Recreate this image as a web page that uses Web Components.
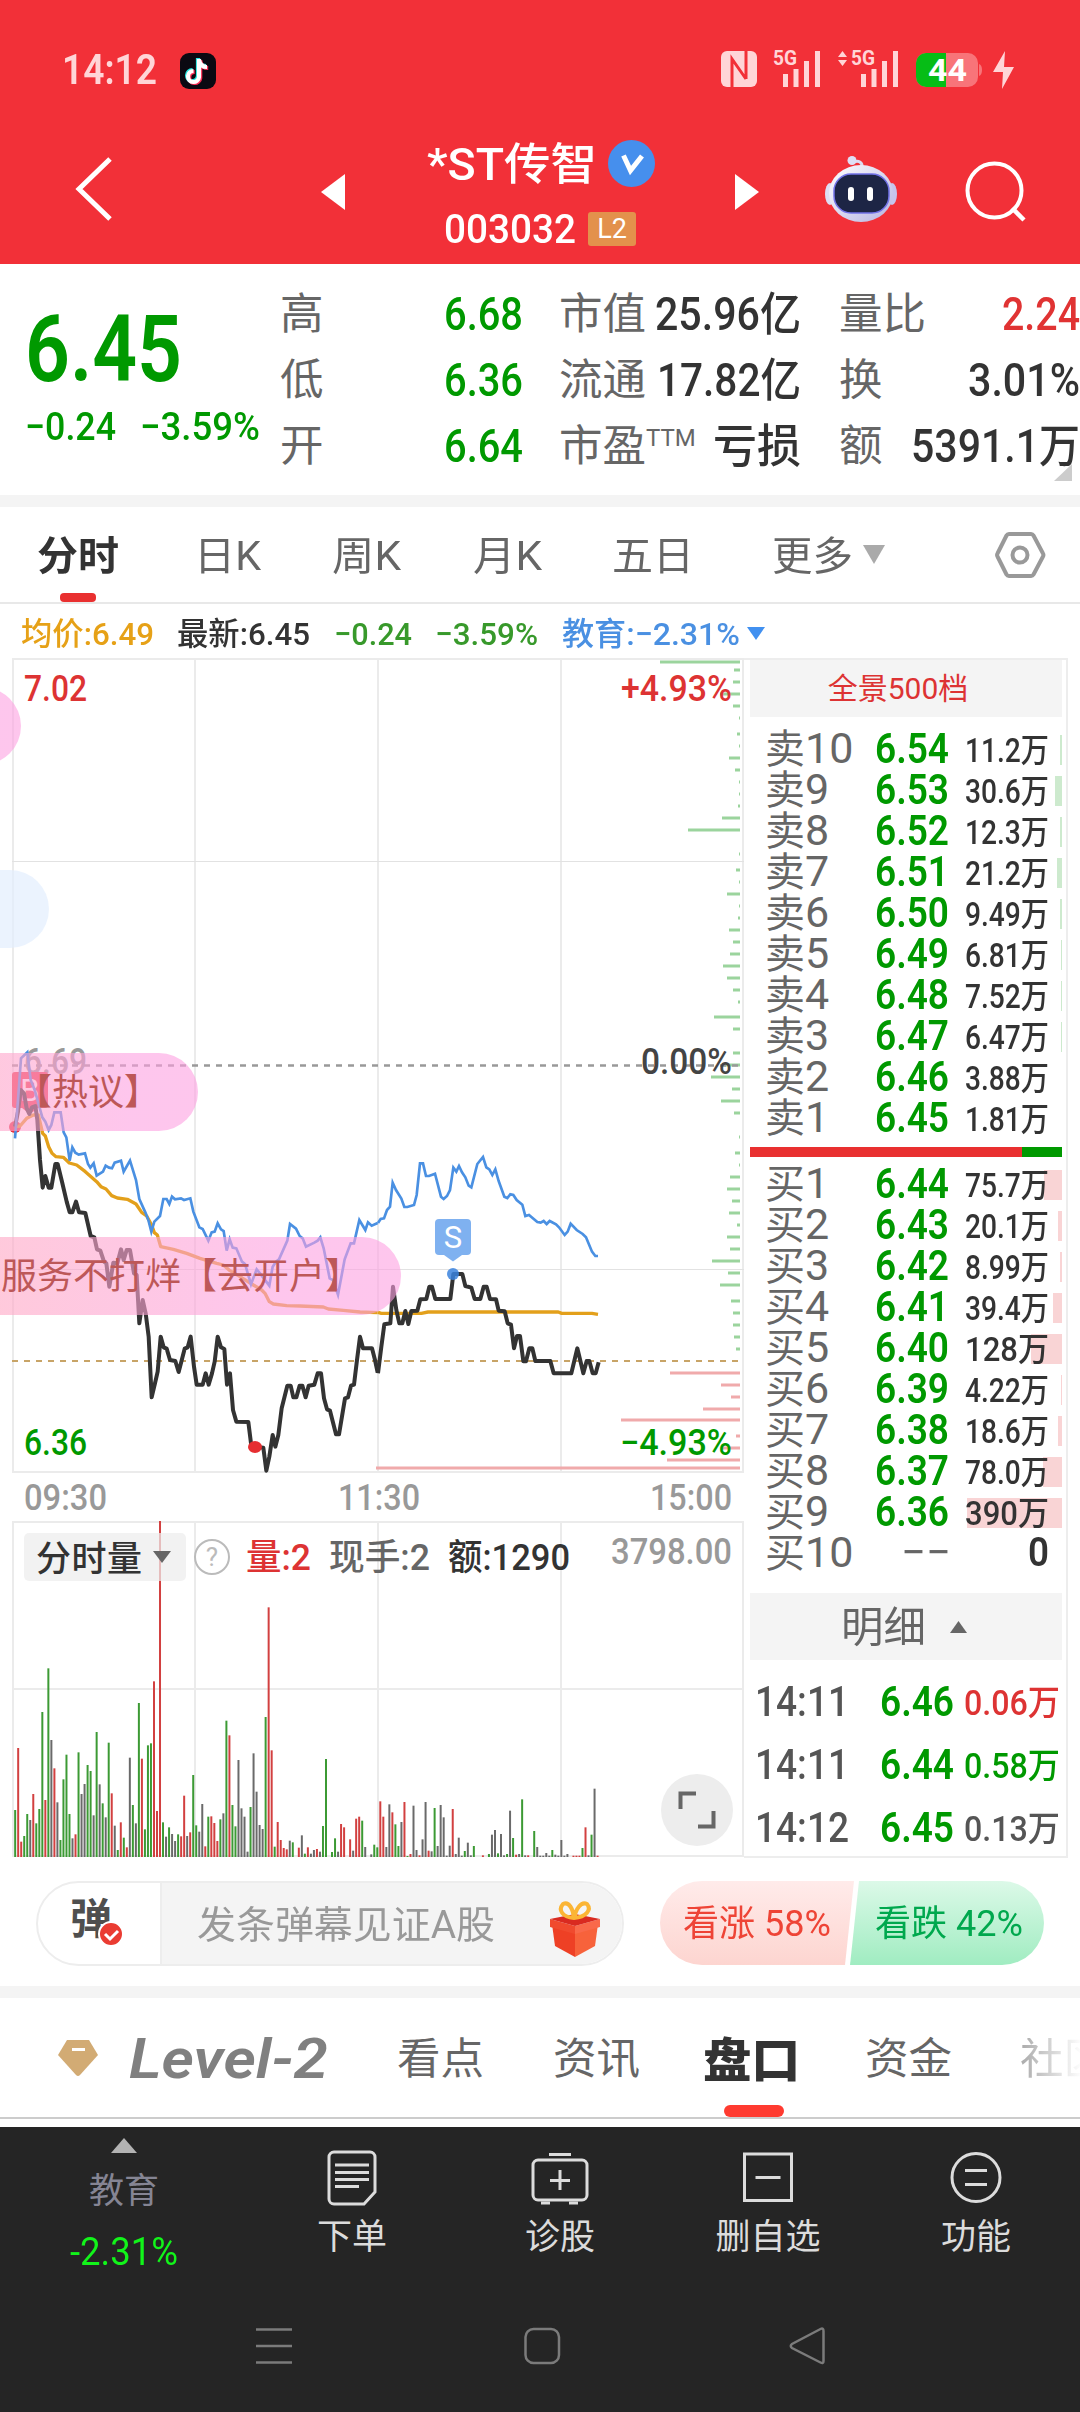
<!DOCTYPE html>
<html lang="zh-CN">
<head>
<meta charset="utf-8">
<title>*ST传智 003032</title>
<style>
  body {
    margin: 0;
    width: 1080px;
    height: 2412px;
    overflow: hidden;
    background: #fff;
    font-family: Roboto, "Noto Sans CJK SC", sans-serif;
    color: #333;
    line-height: 1;
  }
</style>
</head>
<body>
<stock-page></stock-page>

<script>
// Text squeezed to a given width, for the condensed figures
class FitText extends HTMLElement {
  constructor() {
    super();
    this.attachShadow({ mode: 'open' });
    this.shadowRoot.innerHTML = `
      <style>
        :host { display: inline-block; flex: none; line-height: 1; white-space: nowrap; }
        span { display: inline-block; transform-origin: 0 50%; }
      </style>
      <span><slot></slot></span>
    `;
  }

  connectedCallback() {
    const span = this.shadowRoot.querySelector('span');
    const w = Number(this.getAttribute('w'));
    const left = this.getAttribute('ml');
    if (left) this.style.marginLeft = left + 'px';
    const natural = span.getBoundingClientRect().width;
    this.style.width = w + 'px';
    if (natural) span.style.transform = `scaleX(${w / natural})`;
  }
}
customElements.define('fit-text', FitText);

class StatusBar extends HTMLElement {
  constructor() {
    super();
    this.attachShadow({ mode: 'open' });
    this.shadowRoot.innerHTML = `
      <style>
        :host { display: flex; align-items: center; height: 36px; padding: 52px 66px 0 62px; color: #ffd5d7; }
        .time { font-size: 42px; font-weight: 600; }
        .space { flex: 1; }
        svg { display: block; flex: none; overflow: visible; }
        text { font: 700 20px Roboto, sans-serif; }
      </style>
      <fit-text class="time" w="95">14:12</fit-text>
      <svg width="36" height="36" viewBox="0 0 36 36" style="margin-left:23px;margin-top:2px">
        <rect width="36" height="36" rx="9" fill="#0b0912"/>
        <g fill="none" stroke-width="4.2">
          <path d="M19 6v18a5.500 5.500 0 1 1-5.500-6M19 7c1 5 4 7 8 7" stroke="#25e5e0" transform="translate(-1 -1)"/>
          <path d="M19 6v18a5.500 5.500 0 1 1-5.500-6M19 7c1 5 4 7 8 7" stroke="#fb2c55" transform="translate(1.200 1)"/>
          <path d="M19 6v18a5.500 5.500 0 1 1-5.500-6M19 7c1 5 4 7 8 7" stroke="#fff"/>
        </g>
      </svg>
      <div class="space"></div>
      <svg width="293" height="38" viewBox="721 52 293 38" fill="#ffd5d7">
        <rect x="721" y="52" width="36" height="36" rx="6"/>
        <path d="M732 88V60l14 20M746 52v28M732 60v28" fill="none" stroke="#f23037" stroke-width="3"/>
        <text x="773" y="66" textLength="24" lengthAdjust="spacingAndGlyphs">5G</text>
        <path d="M783 75h5v13h-5zM793.500 70h5v18h-5zM804 62h5v26h-5zM815 52h5v36h-5z"/>
        <path d="M838 58l4.500-6 4.500 6zM838 61l4.500 6 4.500-6z"/>
        <text x="851" y="66" textLength="24" lengthAdjust="spacingAndGlyphs">5G</text>
        <path d="M861 75h5v13h-5zM871.500 70h5v18h-5zM882 62h5v26h-5zM893 52h5v36h-5z"/>
        <rect x="916" y="54" width="62" height="34" rx="10" fill="#f87479"/>
        <path d="M926 54h20v34h-20a10 10 0 0 1-10-10V64a10 10 0 0 1 10-10z" fill="#06bd16"/>
        <path d="M979 65q3 1 3 6t-3 6z" fill="#f87479"/>
        <text x="928" y="82" textLength="39" lengthAdjust="spacingAndGlyphs" fill="#fff" style="font-size:31px">44</text>
        <path d="M1005 52l-12 21h10l-1 17 12-22h-10z"/>
      </svg>
    `;
  }
}
customElements.define('status-bar', StatusBar);

class StockHeader extends HTMLElement {
  constructor() {
    super();
    this.attachShadow({ mode: 'open' });
    this.shadowRoot.innerHTML = `
      <style>
        :host { display: block; height: 264px; background: #f23038; color: #fff; }
        .nav { display: flex; height: 176px; align-items: flex-start; }
        svg { display: block; flex: none; }
        .title { width: 390px; display: flex; flex-direction: column; align-items: center; padding-top: 47px; box-sizing: border-box; }
        .name { display: flex; align-items: center; font-size: 44px; font-weight: 500; width: 230px; height: 56px; }
        .name fit-text { margin-top: 3px; }
        .code { display: flex; align-items: center; font-size: 41px; font-weight: 500; width: 192px; height: 50px; margin-top: 13px; }
        .badge { background: #e3914c; border-radius: 3px; width: 48px; height: 34px; margin-left: 12px;
          font-size: 27px; font-weight: 400; line-height: 35px; text-align: center; }
      </style>
      <status-bar></status-bar>
      <div class="nav">
        <svg width="345" height="176" viewBox="0 88 345 176">
          <path d="M110 159L79 189l31 30" fill="none" stroke="#fff" stroke-width="5"/>
          <path d="M321 192l24-18v36z" fill="#fff"/>
        </svg>
        <div class="title">
          <div class="name">
            <fit-text w="170" ml="2">*ST传智</fit-text>
            <svg width="47" height="47" viewBox="0 0 47 47" style="margin-left:11px">
              <circle cx="23.500" cy="23.500" r="23.500" fill="#468fed"/>
              <path d="M15.500 15.500l7 15L34 16" fill="none" stroke="#fff" stroke-width="5"/>
            </svg>
          </div>
          <div class="code">
            <fit-text w="132" ml="0">003032</fit-text>
            <div class="badge">L2</div>
          </div>
        </div>
        <svg width="345" height="176" viewBox="735 88 345 176">
          <defs>
            <linearGradient id="head" x1="0" y1="0" x2="1" y2="1">
              <stop offset="0" stop-color="#fff"/>
              <stop offset="1" stop-color="#b6b4e2"/>
            </linearGradient>
          </defs>
          <path d="M759 192l-24-18v36z" fill="#fff"/>
          <path d="M862 168c1-6-4-8-8-6" fill="none" stroke="#dcdcf2" stroke-width="3"/>
          <circle cx="852" cy="160.500" r="4.500" fill="#dfdff5"/>
          <ellipse cx="830" cy="194" rx="5" ry="11" fill="#dedef4"/>
          <ellipse cx="892" cy="194" rx="5" ry="11" fill="#c6c4ec"/>
          <ellipse cx="861" cy="193.500" rx="32" ry="28.500" fill="url(#head)"/>
          <rect x="834" y="174" width="55" height="39" rx="17" fill="#1d2545" stroke="#7272e8" stroke-width="1.500"/>
          <rect x="848" y="187" width="6" height="14" rx="3" fill="#fff"/>
          <rect x="867" y="187" width="6" height="14" rx="3" fill="#fff"/>
          <circle cx="994.500" cy="190.500" r="27" fill="none" stroke="#fff" stroke-width="4"/>
          <path d="M1012 208l12 12" stroke="#fff" stroke-width="4.500"/>
        </svg>
      </div>
    `;
  }
}
customElements.define('stock-header', StockHeader);

class QuotePanel extends HTMLElement {
  constructor() {
    super();
    this.attachShadow({ mode: 'open' });
    this.shadowRoot.innerHTML = `
      <style>
        :host { display: grid; grid-template-columns: 280px 243px 36px 242px 38px 241px; height: 231px; padding-top: 17px;
          box-sizing: border-box; font-size: 46px; font-weight: 500; position: relative; }
        .green { color: #009900; }
        .red { color: #e03333; }
        .price fit-text { display: block; }
        .price { padding-top: 23px; }
        .big { font-size: 92px; font-weight: 600; }
        .chg { display: flex; margin-top: 12px; font-size: 39px; }
        .col { display: flex; flex-direction: column; }
        .col div { height: 66px; display: flex; align-items: center; justify-content: space-between; }
        label { font-size: 43.500px; font-weight: 400; color: #666; margin-top: 2px; }
        sup { font-size: 24px; line-height: 1; vertical-align: 15px; }
        .corner { position: absolute; right: 8px; bottom: 14px; border-left: 18px solid transparent; border-bottom: 17px solid #ccc; }
      </style>
      <div class="price green">
        <fit-text class="big" w="157" ml="25">6.45</fit-text>
        <div class="chg"><fit-text w="91" ml="25">−0.24</fit-text><fit-text w="120" ml="24">−3.59%</fit-text></div>
      </div>
      <div class="col">
        <div><label>高</label><fit-text class="green" w="79">6.68</fit-text></div>
        <div><label>低</label><fit-text class="green" w="79">6.36</fit-text></div>
        <div><label>开</label><fit-text class="green" w="79">6.64</fit-text></div>
      </div>
      <i></i>
      <div class="col">
        <div><label>市值</label><fit-text w="146">25.96亿</fit-text></div>
        <div><label>流通</label><fit-text w="144">17.82亿</fit-text></div>
        <div><label>市盈<sup>TTM</sup></label><fit-text w="88">亏损</fit-text></div>
      </div>
      <i></i>
      <div class="col">
        <div><label>量比</label><fit-text class="red" w="78">2.24</fit-text></div>
        <div><label>换</label><fit-text w="112">3.01%</fit-text></div>
        <div><label>额</label><fit-text w="169">5391.1万</fit-text></div>
      </div>
      <div class="corner"></div>
    `;
  }
}
customElements.define('quote-panel', QuotePanel);

class PeriodTabs extends HTMLElement {
  constructor() {
    super();
    this.attachShadow({ mode: 'open' });
    this.shadowRoot.innerHTML = `
      <style>
        :host { display: block; border-top: 12px solid #f4f4f4; }
        .tabs { display: flex; align-items: center; height: 97px; border-bottom: 2px solid #e8e8e8; box-sizing: border-box;
          font-size: 40px; color: #666; position: relative; }
        .tabs fit-text { margin-top: 5px; }
        .on { font-weight: 700; color: #333; }
        .line { position: absolute; left: 60px; bottom: 0; width: 36px; height: 9px; border-radius: 4px; background: #e93030; }
        .legend { display: flex; align-items: center; height: 54px; padding-top: 5px; box-sizing: border-box; font-size: 32px; font-weight: 500; }
        svg { flex: none; }
      </style>
      <div class="tabs">
        <fit-text class="on" w="82" ml="37">分时</fit-text>
        <fit-text w="67" ml="75">日K</fit-text>
        <fit-text w="69" ml="71">周K</fit-text>
        <fit-text w="69" ml="72">月K</fit-text>
        <fit-text w="82" ml="70">五日</fit-text>
        <fit-text w="81" ml="78">更多</fit-text>
        <svg width="24" height="19" style="margin-left:9px"><path d="M1 0h22L12 19z" fill="#aaa"/></svg>
        <svg width="52" height="50" viewBox="0 0 52 50" style="margin-left:108px" fill="none" stroke="#999" stroke-width="4">
          <path d="M15 4h22a3 3 0 0 1 2.500 1.500L49 23.500a3 3 0 0 1 0 3L39.500 44.500A3 3 0 0 1 37 46H15a3 3 0 0 1-2.500-1.500L3.500 26.500a3 3 0 0 1 0-3l9-18A3 3 0 0 1 15 4z"/>
          <circle cx="26" cy="25" r="7.500"/>
        </svg>
        <div class="line"></div>
      </div>
      <div class="legend">
        <fit-text w="133" ml="21" style="color:#e6a117">均价:6.49</fit-text>
        <fit-text w="133" ml="23">最新:6.45</fit-text>
        <fit-text w="78" ml="24" style="color:#38992b">−0.24</fit-text>
        <fit-text w="103" ml="23" style="color:#38992b">−3.59%</fit-text>
        <fit-text w="178" ml="24" style="color:#4a90e2">教育:−2.31%</fit-text>
        <svg width="18" height="13" style="margin-left:7px"><path d="M0 0h18L9 13z" fill="#4190f0"/></svg>
      </div>
    `;
  }
}
customElements.define('period-tabs', PeriodTabs);

// Depth ticks at the right edge: [y, start], all ending at x=740
const SELL_TICKS = [
  [662, 660], [670, 734], [682, 733], [694, 720], [706, 733], [718, 739], [734, 737], [746, 739], [758, 729],
  [770, 735], [782, 739], [794, 739], [806, 738], [818, 722], [830, 688], [854, 739], [870, 736], [882, 739],
  [894, 727], [906, 739], [918, 738], [930, 729], [942, 733], [954, 730], [966, 723], [978, 727], [990, 733],
  [1002, 738], [1017, 714], [1029, 733], [1053, 733], [1065, 722], [1077, 711], [1089, 732], [1101, 721],
  [1113, 734], [1137, 739], [1153, 735], [1165, 739], [1177, 730], [1189, 727], [1201, 732], [1213, 729],
  [1225, 737], [1237, 727], [1249, 730], [1261, 712], [1273, 728], [1285, 720], [1301, 731], [1313, 733],
  [1325, 733], [1337, 734], [1349, 736]
];
const BUY_TICKS = [
  [1373, 670], [1385, 721], [1397, 731], [1409, 703], [1420, 621], [1436, 736], [1448, 722], [1460, 667], [1468, 376]
];

// Minute lines in thirds of a pixel, one string per trading session
const PRICE_AM = '45,380 54,335 62,270 72,280 80,325 88,342 96,322 106,318 112,360 120,480 128,563 136,528 146,563 154,563 166,492 173,492 186,545 200,605 209,637 217,637 228,605 237,637 256,639 272,708 283,712 291,748 301,752 312,785 319,790 328,860 340,788 352,790 363,748 371,780 380,750 390,750 402,820 410,825 418,970 428,900 437,940 446,1010 455,1192 465,1150 473,1115 482,1010 491,1042 500,1046 510,1080 526,1083 536,1116 554,1046 563,1042 572,1010 582,1100 590,1154 608,1154 617,1120 626,1154 636,1120 644,1085 653,1010 663,1042 673,1047 681,1154 690,1120 699,1230 709,1265 745,1266 753,1330 765,1340 790,1343 799,1412 808,1370 818,1305 826,1340 835,1305 845,1225 862,1157 872,1157 880,1192 889,1192 899,1157 907,1157 917,1192 926,1157 943,1154 953,1120 963,1120 972,1195 981,1228 990,1232 1008,1303 1017,1303 1035,1195 1044,1192 1053,1157 1062,1154 1071,1080 1080,1010 1089,1045 1116,1045 1125,1080 1133,1118';
const PRICE_PM = '54,820 64,740 73,673 91,670 99,560 109,630 118,670 127,670 136,633 145,672 154,633 172,632 181,598 199,597 208,560 216,560 226,597 271,597 280,522 307,522 316,558 334,563 344,597 361,597 371,560 380,560 390,597 408,598 416,632 434,634 443,670 453,674 462,745 471,708 480,708 490,784 498,784 508,745 517,745 526,783 571,783 581,820 634,820 652,745 670,820 680,783 688,783 698,820 707,820 716,787';
const SECTOR_AM = '45,415 54,300 63,175 82,157 92,240 104,270 127,352 136,365 146,390 154,375 163,337 182,337 191,397 199,412 209,482 217,442 226,458 236,464 255,460 264,492 271,503 281,490 290,527 309,515 317,497 327,503 336,505 344,488 363,482 371,515 390,482 408,540 418,597 436,637 445,660 454,695 463,665 480,648 490,597 500,597 508,612 516,590 525,598 543,595 552,600 571,595 580,635 598,682 608,687 625,722 635,697 644,695 653,670 663,688 671,693 680,752 689,718 698,743 709,745 726,785 735,792 753,853 770,808 780,820 808,857 818,800 828,785 837,778 862,722 870,672 888,686 899,708 908,715 918,740 943,728 953,722 961,712 971,745 980,790 989,835 999,840 1014,884 1034,778 1052,730 1062,730 1078,660 1096,690 1104,667 1115,677 1133,669';
const SECTOR_PM = '54,369 62,357 72,355 81,330 90,320 98,248 108,270 124,296 133,321 142,321 162,315 170,285 180,190 189,190 198,228 207,228 225,221 243,290 251,297 261,288 270,270 280,203 289,215 297,198 306,217 316,232 326,257 334,262 352,192 369,171 379,202 388,208 397,225 406,208 416,243 433,290 442,294 451,283 460,285 470,300 487,314 496,348 507,345 532,366 542,368 551,363 560,372 569,363 588,373 597,382 614,405 623,395 632,371 650,390 668,402 678,412 696,455 706,468 714,468';
const AVG_AM = '45,380 60,378 80,355 100,345 115,345 128,400 136,408 146,440 156,460 168,470 190,472 208,489 230,495 256,515 290,545 303,560 318,567 335,587 352,594 382,598 408,612 425,637 440,648 455,675 463,698 472,705 482,740 520,748 560,760 600,775 650,790 670,795 690,812 720,830 760,855 785,870 795,880 808,905 820,912 860,917 900,918 970,921 985,927 1030,931 1080,936 1133,938';
const AVG_PM = '54,637 64,640 184,640 204,636 595,636 605,640 696,640 714,643';

class PriceChart extends HTMLElement {
  constructor() {
    super();
    this.attachShadow({ mode: 'open' });
    const ticks = list => list.map(([y, x]) => `M${x} ${y}H740`).join('');
    this.shadowRoot.innerHTML = `
      <style>
        :host { display: block; width: 744px; height: 863px; position: relative; overflow: hidden; }
        svg { display: block; }
        .lab { font: 500 36px Roboto, sans-serif; }
        .chip { position: absolute; left: -80px; height: 78px; line-height: 81px; border-radius: 0 39px 39px 0; white-space: nowrap;
          box-sizing: border-box; font-size: 36px; color: #bd5858; }
        .pink { background: linear-gradient(90deg, rgba(255,170,190,.62), rgba(253,160,225,.6) 75%); }
        .blue { background: rgba(225,237,254,.68); }
      </style>
      <svg width="744" height="863" viewBox="0 658 744 863">
        <g fill="none" stroke="#ebebeb" stroke-width="2">
          <path d="M12 659H744M12 1472H744M13 658V1472M195 658V1472M378 658V1472M561 658V1472M743 658V1472"/>
          <path d="M12 861.500H744M12 1269.500H744" stroke="#e2e2e2" stroke-width="1"/>
        </g>
        <path d="${ticks(SELL_TICKS)}" stroke="#9bd49d" stroke-width="3"/>
        <path d="${ticks(BUY_TICKS)}" stroke="#f0aaab" stroke-width="3"/>
        <path d="M12 1065.500H740" stroke="#999" stroke-width="2.500" stroke-dasharray="6 6"/>
        <path d="M12 1361H740" stroke="#c8a467" stroke-width="2" stroke-dasharray="6 6"/>
        <g class="lab">
          <text x="24" y="701" textLength="63" lengthAdjust="spacingAndGlyphs" fill="#dd3333">7.02</text>
          <text x="24" y="1074" textLength="63" lengthAdjust="spacingAndGlyphs" fill="#999">6.69</text>
          <text x="24" y="1455" textLength="63" lengthAdjust="spacingAndGlyphs" fill="#009900">6.36</text>
          <text x="621" y="701" textLength="111" lengthAdjust="spacingAndGlyphs" fill="#dd3333">+4.93%</text>
          <text x="641" y="1074" textLength="91" lengthAdjust="spacingAndGlyphs" fill="#444">0.00%</text>
          <text x="620" y="1455" textLength="112" lengthAdjust="spacingAndGlyphs" fill="#009900">−4.93%</text>
          <text x="24" y="1510" textLength="83" lengthAdjust="spacingAndGlyphs" fill="#999">09:30</text>
          <text x="338" y="1510" textLength="82" lengthAdjust="spacingAndGlyphs" fill="#999">11:30</text>
          <text x="650" y="1510" textLength="82" lengthAdjust="spacingAndGlyphs" fill="#999">15:00</text>
        </g>
        <rect x="12" y="1072" width="36" height="36" rx="3" fill="#ee3b4c"/>
        <path d="M22 1108h16l-8 6z" fill="#ee3b4c"/>
        <text x="30" y="1101" text-anchor="middle" fill="#fff" style="font:31px Roboto">B</text>
        <circle cx="15" cy="1127" r="6" fill="#e83040"/>
        <g fill="none" stroke-linejoin="round">
          <g transform="translate(0 1000) scale(.33333)">
            <polyline points="${AVG_AM}" stroke="#e3a01b" stroke-width="10"/>
            <polyline points="${PRICE_AM}" stroke="#333" stroke-width="12"/>
            <polyline points="${SECTOR_AM}" stroke="#4a90e2" stroke-width="8" stroke-linejoin="miter"/>
          </g>
          <g transform="translate(360 1100) scale(.33333)">
            <polyline points="${AVG_PM}" stroke="#e3a01b" stroke-width="10"/>
            <polyline points="${PRICE_PM}" stroke="#333" stroke-width="12"/>
            <polyline points="${SECTOR_PM}" stroke="#4a90e2" stroke-width="8" stroke-linejoin="miter"/>
          </g>
        </g>
        <ellipse cx="255" cy="1447" rx="7" ry="6" fill="#e62e31"/>
        <rect x="435" y="1219" width="36" height="36" rx="4" fill="#7fb1f0"/>
        <path d="M444 1255h18l-9 6.500z" fill="#7fb1f0"/>
        <text x="453" y="1248" text-anchor="middle" fill="#fff" style="font:31px Roboto">S</text>
        <circle cx="453" cy="1274" r="6" fill="#3b82dd" fill-opacity=".85"/>
      </svg>
      <div class="chip pink" style="top:29px;width:101px"></div>
      <div class="chip blue" style="top:212px;width:129px"></div>
      <div class="chip pink" style="top:395px;width:278px;padding-left:96px">【热议】</div>
      <div class="chip pink" style="top:579px;width:481px;padding-left:81px">服务不打烊【去开户】</div>
    `;
  }
}
customElements.define('price-chart', PriceChart);

// Minute volumes: colour and bar top, thirds of a pixel ("-" for no trade)
const VOLUMES = 'g930 r744 r1025 g1008 g942 k960 r882 g970 g927 g636 r900 g505 k720 r805 k907 g1020 g838 g764 g942 k1015 r1003 g757 k882 k852 g795 g813 k946 g696 k853 g910 k952 g728 r880 k977 g1050 r967 g1013 r1042 k773 g915 k970 g609 r776 g988 g736 g730 r544 r933 r63 g967 k1010 g982 k1002 k1023 g1003 r1009 r887 k1008 r997 g825 g976 k995 k912 r1039 g950 r949 r969 r1023 g958 k940 g662 r706 g915 g979 k780 k925 k950 k1055 g921 k760 k875 k975 k987 g651 r322 r751 g1040 r966 r1020 r1044 r1048 k1022 g1027 - r1043 k1006 g1061 r1042 k1061 k1050 r1047 k1055 g978 g777 - g1056 g1015 k1055 r972 r982 - r1018 k1052 r956 r950 g962 k1041 - k1063 g1034 g1042 r904 r950 k1041 k913 r937 g973 g1038 k966 r906 g1068 r1062 k917 k1050 r1066 k1018 k906 r1052 k1054 g924 k1038 k915 k952 k1067 k1037 r927 k1062 k1013 k1067 g1053 k1028 k1066 g1038 - - r1066 - g1062 k1004 k990 g1060 k1002 k1066 g1062 k932 g1014 r1064 k1062 g898 k1066 r1066 - g993 k1041 k1067 k1067 k1059 k1067 g1050 k1064 k1067 k1020 k1067 k1062 - r1067 r1067 r1067 g1044 r982 k1066 g1004 k866 r1067'.split(' ');

class VolumeChart extends HTMLElement {
  constructor() {
    super();
    this.attachShadow({ mode: 'open' });
    const colors = { g: '#3c9a34', r: '#d24040', k: '#6a6a6a' };
    const bars = VOLUMES.map((v, i) => {
      if (v === '-') return '';
      const top = 1500 + Number(v.slice(1)) / 3;
      const x = (45.5 + i * 9.053) / 3;
      return `<path d="M${x.toFixed(2)} 1857V${top.toFixed(2)}" stroke="${colors[v[0]]}"/>`;
    }).join('');
    this.shadowRoot.innerHTML = `
      <style>
        :host { display: block; width: 744px; height: 337px; }
        svg { display: block; }
        text { font: 500 36px Roboto, "Noto Sans CJK SC", sans-serif; }
      </style>
      <svg width="744" height="337" viewBox="0 1521 744 337">
        <path d="M12 1522H744M12 1689H744M12 1856H744M13 1521V1857M195 1521V1857M378 1521V1857M561 1521V1857M743 1521V1857"
          fill="none" stroke="#ebebeb" stroke-width="2"/>
        <g stroke-width="2">${bars}</g>
        <rect x="24" y="1533" width="162" height="48" rx="5" fill="#ededed" fill-opacity=".72"/>
        <text x="36" y="1571" textLength="106" fill="#333" style="font-size:35px">分时量</text>
        <path d="M153 1551h18l-9 12z" fill="#666"/>
        <circle cx="212" cy="1557" r="17" fill="none" stroke="#bbb" stroke-width="2"/>
        <text x="212" y="1566" text-anchor="middle" fill="#bbb" style="font-size:26px;font-weight:400">?</text>
        <text x="246" y="1570" textLength="65" lengthAdjust="spacingAndGlyphs" fill="#dd3333">量:2</text>
        <text x="329" y="1570" textLength="101" lengthAdjust="spacingAndGlyphs" fill="#666">现手:2</text>
        <text x="448" y="1570" textLength="122" lengthAdjust="spacingAndGlyphs" fill="#333">额:1290</text>
        <text x="611" y="1564" textLength="121" lengthAdjust="spacingAndGlyphs" fill="#999">3798.00</text>
        <circle cx="697" cy="1810" r="36" fill="#ededed"/>
        <path d="M696 1793.500H680.500V1809M698 1826.500H713.500V1811" fill="none" stroke="#666" stroke-width="4"/>
      </svg>
    `;
  }
}
customElements.define('volume-chart', VolumeChart);

class OrderRow extends HTMLElement {
  constructor() {
    super();
    this.attachShadow({ mode: 'open' });
  }

  connectedCallback() {
    const a = name => this.getAttribute(name) || '';
    const label = a('label');
    const vol = a('vol');
    const empty = vol === '0';
    this.shadowRoot.innerHTML = `
      <style>
        :host { display: flex; align-items: center; height: 41px; position: relative; }
        .bar { position: absolute; right: 0; top: 7px; height: 30px; width: ${a('bar') || 0}px; background: ${label[0] === '卖' ? '#cdeace' : '#f9d4d5'}; }
        .label { font-size: 43px; color: #666; width: 126px; padding-left: 15px; box-sizing: border-box; flex: none; }
        .label span { font-size: 40px; }
        fit-text { position: relative; }
        .price { font-size: 43px; font-weight: 600; color: #009900; }
        .vol { font-size: 33px; font-weight: 500; margin-top: 4px; }
        .none { font-size: 43px; color: #666; }
        .zero { font-size: 41px; font-weight: 600; }
      </style>
      <div class="bar"></div>
      <div class="label"><span>${label[0]}</span>${label.slice(1)}</div>
      ${empty
        ? `<fit-text class="none" w="50" ml="25">−−</fit-text><fit-text class="zero" w="21" ml="77">0</fit-text>`
        : `<fit-text class="price" w="74" ml="-1">${a('price')}</fit-text><fit-text class="vol" w="84" ml="16">${vol}</fit-text>`}
    `;
  }
}
customElements.define('order-row', OrderRow);

class OrderBook extends HTMLElement {
  constructor() {
    super();
    this.attachShadow({ mode: 'open' });
    const asks = [
      ['卖10', '6.54', '11.2万', 2], ['卖9', '6.53', '30.6万', 7], ['卖8', '6.52', '12.3万', 2], ['卖7', '6.51', '21.2万', 5],
      ['卖6', '6.50', '9.49万', 2], ['卖5', '6.49', '6.81万', 1], ['卖4', '6.48', '7.52万', 1], ['卖3', '6.47', '6.47万', 1],
      ['卖2', '6.46', '3.88万', 0], ['卖1', '6.45', '1.81万', 0]
    ];
    const bids = [
      ['买1', '6.44', '75.7万', 18], ['买2', '6.43', '20.1万', 4], ['买3', '6.42', '8.99万', 2], ['买4', '6.41', '39.4万', 9],
      ['买5', '6.40', '128万', 31], ['买6', '6.39', '4.22万', 1], ['买7', '6.38', '18.6万', 4], ['买8', '6.37', '78.0万', 19],
      ['买9', '6.36', '390万', 95], ['买10', '', '0', 0]
    ];
    const deals = [
      ['14:11', '6.46', '0.06万', '#dd3333'], ['14:11', '6.44', '0.58万', '#009900'], ['14:12', '6.45', '0.13万', '#555']
    ];
    const row = ([label, price, vol, bar]) => `<order-row label="${label}" price="${price}" vol="${vol}" bar="${bar}"></order-row>`;
    this.shadowRoot.innerHTML = `
      <style>
        :host { display: block; width: 324px; height: 1200px; box-sizing: border-box; border: 2px solid #ededed; border-left: 0; padding: 0 4px 0 6px; }
        .depth { height: 57px; line-height: 57px; background: #f4f4f4; color: #dd3333; font-size: 30px; text-align: center; margin-bottom: 11px; padding-right: 16px; }
        .ratio { height: 10px; margin: 9px 0 6px; background: linear-gradient(90deg, #e93030 87.3%, #009900 87.3%); }
        .more { display: flex; align-items: center; height: 67px; background: #f4f4f4; margin: 20px 0 10px; font-size: 42px; color: #666; }
        .more fit-text { margin-top: 3px; }
        .deal { display: flex; align-items: center; height: 63px; font-weight: 500; font-size: 43px; color: #555; }
        .deal .p { color: #009900; font-weight: 600; }
        .deal .v { font-size: 35px; margin-top: 3px; }
      </style>
      <div class="depth">全景500档</div>
      ${asks.map(row).join('')}
      <div class="ratio"></div>
      ${bids.map(row).join('')}
      <div class="more"><fit-text w="85" ml="91">明细</fit-text>
        <svg width="17" height="12" style="margin-left:24px"><path d="M0 12h17L8.500 0z" fill="#666"/></svg></div>
      ${deals.map(([t, p, v, c]) => `
        <div class="deal"><fit-text w="94" ml="5">${t}</fit-text><fit-text class="p" w="74" ml="31">${p}</fit-text><fit-text
          class="v" w="96" ml="10" style="color:${c}">${v}</fit-text></div>`).join('')}
    `;
  }
}
customElements.define('order-book', OrderBook);

class CommentBar extends HTMLElement {
  constructor() {
    super();
    this.attachShadow({ mode: 'open' });
    this.shadowRoot.innerHTML = `
      <style>
        :host { display: flex; height: 128px; padding: 23px 36px 0; box-sizing: border-box; }
        .input { display: flex; width: 588px; height: 85px; box-sizing: border-box; border: 2px solid #ededed; border-radius: 43px; overflow: hidden; }
        .toggle { width: 124px; border-right: 2px solid #ededed; box-sizing: border-box; padding: 16px 0 0 32px; position: relative;
          font-size: 42px; font-weight: 700; color: #4f4f4f; }
        .toggle svg { position: absolute; left: 60px; top: 38px; }
        .field { flex: 1; background: #f4f4f4; display: flex; align-items: center; font-size: 38px; color: #999; }
        .field fit-text { margin-top: 2px; }
        .vote { position: relative; display: flex; margin-left: 36px; width: 384px; height: 84px; font-size: 36px; }
        .vote > svg { position: absolute; left: 0; top: 0; }
        .vote fit-text { position: relative; margin-top: 25px; }
      </style>
      <div class="input">
        <div class="toggle">弹
          <svg width="26" height="26" viewBox="0 0 26 26"><circle cx="13" cy="13" r="12" fill="#ea3c32" stroke="#fff" stroke-width="2"/>
            <path d="M7 13l5 5 8-8" fill="none" stroke="#fff" stroke-width="3"/></svg>
        </div>
        <div class="field">
          <fit-text w="298" ml="35">发条弹幕见证A股</fit-text>
          <svg width="50" height="54" viewBox="0 0 50 54" style="margin-left:55px;margin-top:12px;overflow:visible">
            <path d="M2 21l23 6v27L5 43z" fill="#ee4025"/>
            <path d="M48 21l-23 6v27l20-11z" fill="#f7623b"/>
            <path d="M0 16l25 7v8L0 24z" fill="#f04a2e"/>
            <path d="M50 16l-25 7v8l25-7z" fill="#f9694a"/>
            <path d="M0 16l25-5 25 5-25 7z" fill="#d92a20"/>
            <path d="M24 15C12 14 8 7 13 1c6-3 10 5 11 14 2-9 7-17 13-14 5 6-1 13-13 14z" fill="none" stroke="#fbb535" stroke-width="4"/>
          </svg>
        </div>
      </div>
      <div class="vote">
        <svg width="384" height="84" viewBox="0 0 384 84">
          <defs>
            <linearGradient id="up" x1="0" y1="0" x2="0" y2="1"><stop offset="0" stop-color="#ffebea"/><stop offset="1" stop-color="#fdd5d0"/></linearGradient>
            <linearGradient id="down" x1="0" y1="0" x2="0" y2="1"><stop offset="0" stop-color="#dcf9e8"/><stop offset="1" stop-color="#a0ecc1"/></linearGradient>
          </defs>
          <path d="M42 0H194L185 84H42A42 42 0 0 1 42 0z" fill="url(#up)"/>
          <path d="M199 0H342A42 42 0 0 1 342 84H190z" fill="url(#down)"/>
        </svg>
        <fit-text w="148" ml="23" style="color:#ee4436">看涨 58%</fit-text>
        <fit-text w="148" ml="44" style="color:#00a84e">看跌 42%</fit-text>
      </div>
    `;
  }
}
customElements.define('comment-bar', CommentBar);

class SectionTabs extends HTMLElement {
  constructor() {
    super();
    this.attachShadow({ mode: 'open' });
    this.shadowRoot.innerHTML = `
      <style>
        :host { display: flex; align-items: center; height: 133px; box-sizing: border-box; border-top: 12px solid #f4f4f4; border-bottom: 2px solid #ccc;
          font-size: 43.500px; color: #666; position: relative; overflow: hidden; white-space: nowrap; }
        span, .on { margin-top: 5px; }
        .level { font-family: Roboto, sans-serif; font-size: 56px; font-weight: 600; font-style: italic; color: #808080; margin-top: 2px; }
        .on { color: #333; font-weight: 900; font-size: 47px; }
        .line { position: absolute; left: 724px; bottom: 0; width: 60px; height: 12px; border-radius: 6px; background: #ff3b30; }
        .fade { background: linear-gradient(90deg, #aaa, #fff 62px); -webkit-background-clip: text; background-clip: text; color: transparent; margin-left: 68px; }
        svg { flex: none; }
      </style>
      <svg width="40" height="36" viewBox="0 0 40 36" style="margin-left:58px">
        <path d="M9 0h22l9 15-18 20q-2 2-4 0L0 15z" fill="#d2ab74"/>
        <path d="M14 9.500h13" stroke="#fff" stroke-width="3"/>
      </svg>
      <fit-text class="level" w="199" ml="31">Level-2</fit-text>
      <span style="margin-left:69px">看点</span>
      <span style="margin-left:69px">资讯</span>
      <fit-text class="on" w="97" ml="63">盘口</fit-text>
      <span style="margin-left:65px">资金</span>
      <span class="fade">社区</span>
      <div class="line"></div>
    `;
  }
}
customElements.define('section-tabs', SectionTabs);

class BottomBar extends HTMLElement {
  constructor() {
    super();
    this.attachShadow({ mode: 'open' });
    this.shadowRoot.innerHTML = `
      <style>
        :host { display: block; height: 285px; margin-top: 8px; background: #252525; color: #dcdcdc; }
        .items { display: grid; grid-template-columns: 248px repeat(4, 208px); height: 180px; font-size: 35px; }
        .items div { display: flex; flex-direction: column; align-items: center; }
        .items div svg { margin: 21px 0 14px; }
        .items .sector { color: #858594; padding-top: 11px; font-size: 35px; }
        .items .sector .up { margin: 0 0 21px; }
        .sector fit-text { color: #12f41a; font-size: 38px; margin-top: 24px; }
        svg { display: block; }
      </style>
      <div class="items">
        <div class="sector">
          <svg class="up" width="26" height="15"><path d="M0 15h26L13 0z" fill="#b3b3b3"/></svg>
          <span>教育</span>
          <fit-text w="108">-2.31%</fit-text>
        </div>
        <div>
          <svg width="60" height="58" viewBox="0 0 60 58" fill="none" stroke="#dcdcdc" stroke-width="3">
            <path d="M12 4h36a5 5 0 0 1 5 5v35L42 56H12a5 5 0 0 1-5-5V9a5 5 0 0 1 5-5zM13 17h34M13 24.500h34M13 31.500h34M13 38.500h24"/>
          </svg><span>下单</span>
        </div>
        <div>
          <svg width="60" height="58" viewBox="0 0 60 58" fill="none" stroke="#dcdcdc" stroke-width="3">
            <rect x="3" y="12" width="54" height="40" rx="5"/>
            <path d="M19 6.500h22M30 22v20M20 32.500h20M11 55h9M39 55h9"/>
          </svg><span>诊股</span>
        </div>
        <div>
          <svg width="60" height="58" viewBox="0 0 60 58" fill="none" stroke="#dcdcdc" stroke-width="3">
            <path d="M6.500 6H53.500V52.500H6.500zM17.500 29.500h25"/>
          </svg><span>删自选</span>
        </div>
        <div>
          <svg width="60" height="58" viewBox="0 0 60 58" fill="none" stroke="#dcdcdc" stroke-width="3">
            <circle cx="30" cy="29.500" r="24"/>
            <path d="M19 22.500h22M19 36.500h22"/>
          </svg><span>功能</span>
        </div>
      </div>
      <svg width="1080" height="105" viewBox="0 2307 1080 105" fill="none" stroke="#7b7b7b" stroke-width="2.500">
        <path d="M256 2329.500h36M256 2346h36M256 2362.500h36"/>
        <rect x="525.500" y="2329" width="33.500" height="34" rx="8"/>
        <path d="M823.500 2331v30q0 3-3 1.500L792 2348q-2.500-2 0-4l28.500-15q3-1.500 3 2z"/>
      </svg>
    `;
  }
}
customElements.define('bottom-bar', BottomBar);

class StockPage extends HTMLElement {
  constructor() {
    super();
    this.attachShadow({ mode: 'open' });
    this.shadowRoot.innerHTML = `
      <style>
        :host { display: block; }
        .market { display: flex; height: 1200px; }
      </style>
      <stock-header></stock-header>
      <quote-panel></quote-panel>
      <period-tabs></period-tabs>
      <div class="market">
        <div><price-chart></price-chart><volume-chart></volume-chart></div>
        <order-book></order-book>
      </div>
      <comment-bar></comment-bar>
      <section-tabs></section-tabs>
      <bottom-bar></bottom-bar>
    `;
  }
}
customElements.define('stock-page', StockPage);
</script>
</body>
</html>
